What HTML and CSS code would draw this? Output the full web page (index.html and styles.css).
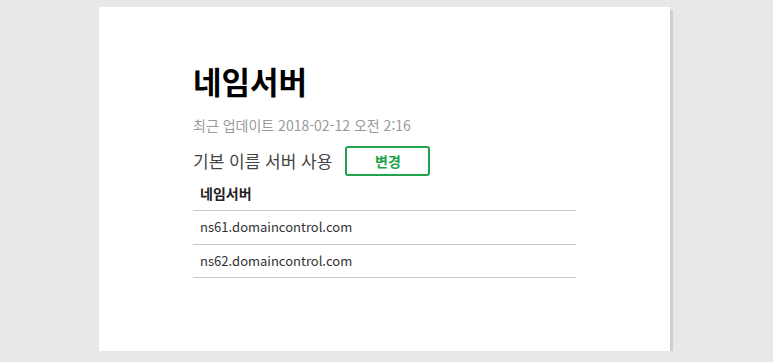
FILE: index.html
```html
<!DOCTYPE html>
<html lang="ko">
<head>
<meta charset="utf-8">
<link rel="stylesheet" href="styles.css">
</head>
<body>
<div class="card">
  <div class="content">
    <h1 class="title">네임서버</h1>
    <p class="updated">최근 업데이트 2018-02-12 오전 2:16</p>
    <div class="mode-row">
      <span class="mode">기본 이름 서버 사용</span>
      <button class="change-btn">변경</button>
    </div>
    <table class="ns-table">
      <thead><tr><th>네임서버</th></tr></thead>
      <tbody>
        <tr><td>ns61.domaincontrol.com</td></tr>
        <tr><td>ns62.domaincontrol.com</td></tr>
      </tbody>
    </table>
  </div>
</div>
</body>
</html>
```
FILE: styles.css
```css
html, body {
  margin: 0;
  padding: 0;
  background: #e8e8e8;
}
body {
  font-family: "Noto Sans CJK KR", "Noto Sans", sans-serif;
  color: #333;
}
.card {
  margin: 7px 0 0 99px;
  width: 571px;
  height: 344px;
  background: #fff;
  box-shadow: 3px 3px 0 #cfcfcf;
  box-sizing: border-box;
  padding: 54px 0 0 94px;
}
.content {
  width: 383px;
}
.title {
  margin: 0;
  font-size: 31px;
  font-weight: 700;
  line-height: 40px;
  color: #000;
}
.updated {
  margin: 14px 0 0;
  font-size: 14px;
  line-height: 20px;
  color: #999;
}
.mode-row {
  display: flex;
  align-items: center;
  gap: 13px;
  margin-top: 11px;
}
.mode {
  font-size: 17px;
  line-height: 22px;
  color: #444;
}
.change-btn {
  width: 85px;
  height: 30px;
  border: 2.5px solid #23a24d;
  border-radius: 3px;
  background: #fff;
  color: #23a24d;
  font-family: inherit;
  font-size: 14px;
  font-weight: 700;
  padding: 0;
}
.ns-table {
  width: 100%;
  border-collapse: collapse;
  margin-top: 1px;
  font-size: 13px;
}
.ns-table th {
  text-align: left;
  font-weight: 700;
  font-size: 14px;
  padding: 6px 7px 7px;
  line-height: 20px;
  border-bottom: 1px solid #c8c8c8;
  color: #222;
}
.ns-table td {
  padding: 6px 7px 6.5px;
  line-height: 20px;
  border-bottom: 1px solid #c8c8c8;
  color: #333;
}
```
